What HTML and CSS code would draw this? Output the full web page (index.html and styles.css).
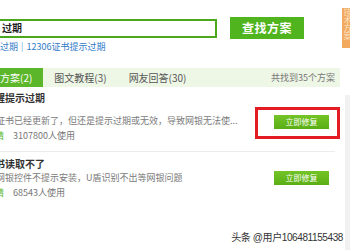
FILE: index.html
```html
<!DOCTYPE html>
<html lang="zh-CN">
<head>
<meta charset="utf-8">
<title>查找方案</title>
<link rel="stylesheet" href="styles.css">
</head>
<body>
<div class="page">
  <div class="search-row">
    <div class="search-input"><span class="q">过期</span></div>
    <button class="search-btn">查找方案</button>
  </div>
  <div class="links"><a class="lnk">过期</a><span class="sep">|</span><a class="lnk">12306证书提示过期</a></div>
  <div class="tabs">
    <div class="tab active">方案(2)</div>
    <div class="tab">图文教程(3)</div>
    <div class="tab">网友回答(30)</div>
    <div class="count">共找到35个方案</div>
  </div>
  <div class="list">
    <div class="item first">
      <div class="info">
        <div class="title">醒提示过期</div>
        <div class="desc">证书已经更新了，但还是提示过期或无效，导致网银无法使...</div>
        <div class="users"><span class="tag">精</span>3107800人使用</div>
      </div>
      <div class="action"><span class="mark"><button class="fix">立即修复</button></span></div>
    </div>
    <div class="item">
      <div class="info">
        <div class="title">书读取不了</div>
        <div class="desc">网银控件不提示安装，U盾识别不出等网银问题</div>
        <div class="users"><span class="tag">精</span>68543人使用</div>
      </div>
      <div class="action"><button class="fix">立即修复</button></div>
    </div>
  </div>
</div>
<div class="side-tab">技术方案</div>
<div class="side-panel"></div>
<div class="watermark">头条 @用户106481155438</div>
</body>
</html>
```

FILE: styles.css
```css
html, body {
  margin: 0;
  padding: 0;
  background: #ffffff;
  width: 350px;
  height: 250px;
  overflow: hidden;
  position: relative;
  font-family: "Noto Sans CJK SC", "Noto Sans", sans-serif;
}

.page {
  padding-top: 17px;
}

.search-row {
  display: flex;
  align-items: center;
  gap: 13px;
  height: 22px;
}

.search-input {
  box-sizing: border-box;
  width: 219px;
  height: 19px;
  margin-left: -2px;
  border: 2px solid #4ba81d;
  display: flex;
  align-items: center;
  padding-left: 2px;
}

.q {
  font-size: 10px;
  font-weight: bold;
  color: #222;
  line-height: 14px;
}

.search-btn {
  box-sizing: border-box;
  width: 74px;
  height: 22px;
  border: none;
  padding: 0;
  background: #4fb41e;
  color: #fff;
  font-family: inherit;
  font-size: 12px;
  font-weight: bold;
  line-height: 22px;
  letter-spacing: 0.5px;
}

.links {
  margin-top: 2px;
  font-size: 9px;
  line-height: 12px;
  color: #2f7bc8;
  display: flex;
  gap: 3px;
}

.links .sep {
  color: #7aa7d8;
}

.tabs {
  margin-top: 15px;
  width: 340px;
  height: 19px;
  background: #eef6e6;
  display: flex;
  align-items: center;
  font-size: 10px;
  color: #555;
}

.tab {
  padding: 0 11px;
  line-height: 19px;
  height: 19px;
}

.tab.active {
  margin-left: -11px;
  background: #5cb62a;
  color: #fff;
}

.count {
  margin-left: auto;
  padding-right: 5px;
  font-size: 9px;
  color: #777;
}

.list {
  width: 335px;
}

.item {
  display: flex;
  align-items: flex-start;
  padding: 5px 0 8px;
}

.item.first {
  border-bottom: 1px solid #ececec;
  padding-top: 4px;
  padding-bottom: 9px;
}

.info {
  flex: 1;
  min-width: 0;
}

.title {
  font-size: 10px;
  font-weight: bold;
  color: #333;
  line-height: 14px;
  margin-left: -5px;
}

.desc {
  font-size: 9px;
  color: #7a7a7a;
  line-height: 13px;
  margin-left: -4px;
  white-space: nowrap;
}

.item.first .desc {
  margin-top: 9px;
}

.users {
  font-size: 9px;
  color: #777;
  line-height: 13px;
  margin-top: 2px;
  display: flex;
  align-items: center;
}

.tag {
  display: inline-block;
  width: 11px;
  margin-left: -5px;
  margin-right: 7px;
  color: #5cb82a;
  font-size: 9px;
}

.action {
  width: 80px;
  display: flex;
  padding-left: 19px;
  box-sizing: border-box;
  margin-top: 14px;
}

.item.first .action {
  margin-top: 24px;
}

.mark {
  display: inline-flex;
  border: 3px solid #e31b23;
  padding: 5px 8px 7px 16px;
  margin: -8px -11px -10px -19px;
}

.fix {
  box-sizing: border-box;
  width: 55px;
  height: 14px;
  border: none;
  padding: 0;
  background: linear-gradient(#74c427, #5aae14);
  color: #fff;
  font-family: inherit;
  font-size: 8px;
  line-height: 14px;
}

.side-tab {
  position: absolute;
  left: 342px;
  top: 8px;
  width: 10px;
  height: 40px;
  background: #f2a95e;
  color: #fce3c8;
  font-size: 8px;
  line-height: 10px;
  writing-mode: vertical-rl;
  overflow: hidden;
}

.side-panel {
  position: absolute;
  left: 345px;
  top: 95px;
  width: 5px;
  height: 155px;
  background: #f1f1f1;
}

.watermark {
  position: absolute;
  right: 7px;
  bottom: 6px;
  font-family: "Liberation Sans", "Noto Sans CJK SC", sans-serif;
  font-size: 10px;
  line-height: 13px;
  color: #333;
  letter-spacing: -0.4px;
  text-shadow: 0 0 1px #fff, 0 0 2px #fff, 1px 1px 0 #fff, -1px -1px 0 #fff;
}
```
